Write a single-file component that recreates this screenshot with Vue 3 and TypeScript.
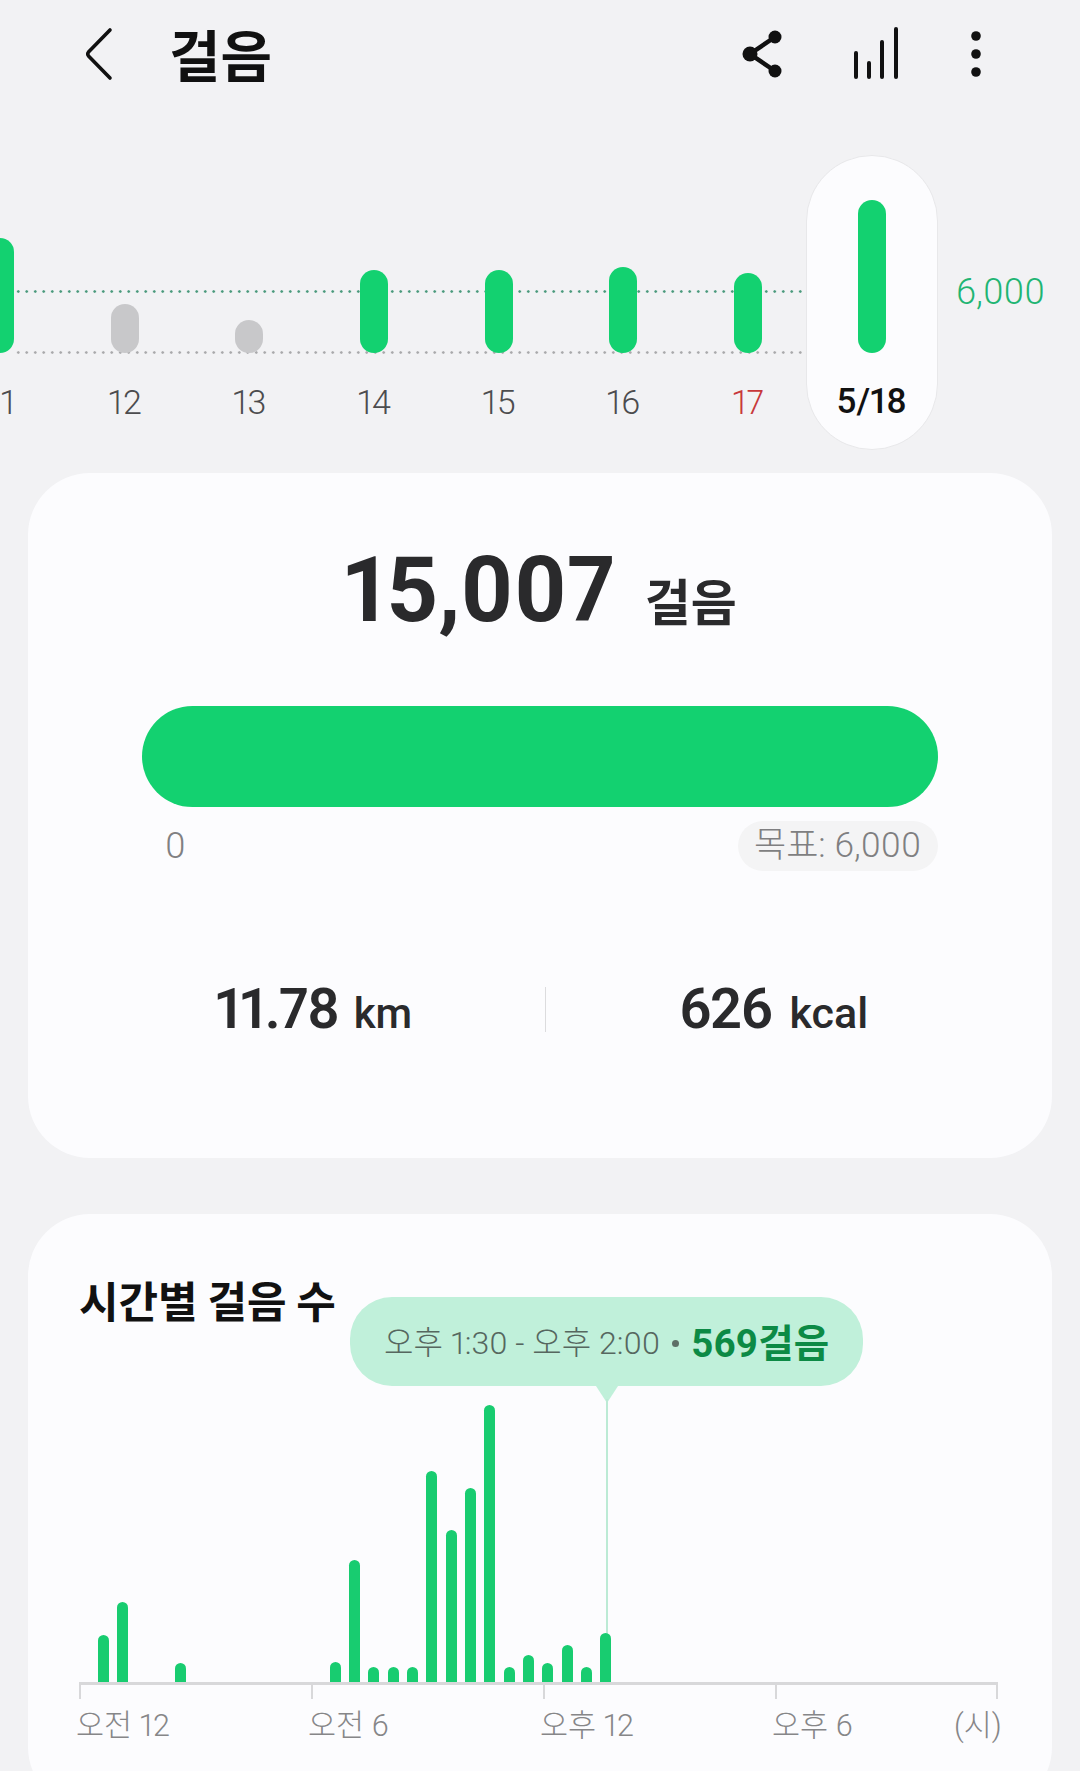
<script setup lang="ts">
const days = [
  { label: '11', height: 115, color: 'green' },
  { label: '12', height: 49, color: 'gray' },
  { label: '13', height: 33, color: 'gray' },
  { label: '14', height: 83, color: 'green' },
  { label: '15', height: 83, color: 'green' },
  { label: '16', height: 86, color: 'green' },
  { label: '17', height: 80, color: 'green', sunday: true },
  { label: '5/18', height: 153, color: 'green', selected: true },
]

// half hour slots, midnight first
const slots: number[] = [47, 80, 0, 0, 19, 0, 0, 0, 0, 0, 0, 0, 20, 122, 15, 15, 15, 211, 152, 194, 277, 15, 27, 19, 37, 15, 49]

const axisLabels = ['오전 12', '오전 6', '오후 12', '오후 6']
</script>

<template>
  <div class="page">
    <header class="top-bar">
      <svg class="back" width="30" height="54" viewBox="0 0 30 54">
        <path d="M26 3 L4.500 25 Q3 27 4.500 29 L26 51" fill="none" stroke="#111" stroke-width="3.600" stroke-linecap="round" stroke-linejoin="round" />
      </svg>
      <h1 class="title">걸음</h1>
      <div class="actions">
        <svg width="46" height="50" viewBox="0 0 46 50">
          <path d="M35 8 L10 25 L35 42" fill="none" stroke="#111" stroke-width="4.500" />
          <circle cx="35" cy="8" r="6.500" fill="#111" />
          <circle cx="10" cy="25" r="7.500" fill="#111" />
          <circle cx="35" cy="42" r="6.500" fill="#111" />
        </svg>
        <svg class="bars-icon" width="50" height="54" viewBox="0 0 50 54">
          <g stroke="#111" stroke-width="4" stroke-linecap="round">
            <line x1="5" y1="27" x2="5" y2="51" />
            <line x1="18" y1="37" x2="18" y2="51" />
            <line x1="31" y1="16" x2="31" y2="51" />
            <line x1="45" y1="3" x2="45" y2="51" />
          </g>
        </svg>
        <svg class="more" width="12" height="48" viewBox="0 0 12 48">
          <circle cx="6" cy="6" r="4.800" fill="#111" />
          <circle cx="6" cy="24" r="4.800" fill="#111" />
          <circle cx="6" cy="42" r="4.800" fill="#111" />
        </svg>
      </div>
    </header>

    <section class="week">
      <div class="line line-goal"></div>
      <div class="line line-base"></div>
      <div
        v-for="day in days"
        :key="day.label"
        class="day"
        :class="{ selected: day.selected, sunday: day.sunday }"
      >
        <div class="day-plot">
          <div class="day-bar" :class="day.color" :style="{ height: day.height + 'px' }"></div>
        </div>
        <span class="day-label">{{ day.label }}</span>
      </div>
      <span class="goal-label">6,000</span>
    </section>

    <section class="card summary">
      <div class="total">
        <span class="total-num">15,007</span>
        <span class="total-unit">걸음</span>
      </div>
      <div class="progress"></div>
      <div class="scale">
        <span class="zero">0</span>
        <span class="target">목표: 6,000</span>
      </div>
      <div class="stats">
        <div class="stat"><b>11.78</b><em>km</em></div>
        <div class="divider"></div>
        <div class="stat stat-right"><b>626</b><em>kcal</em></div>
      </div>
    </section>

    <section class="card hourly">
      <h2 class="hourly-title">시간별 걸음 수</h2>
      <div class="tip">
        <span class="tip-time">오후 1:30 - 오후 2:00</span>
        <span class="tip-dot"></span>
        <span class="tip-value">569걸음</span>
      </div>
      <div class="tip-arrow"></div>
      <div class="tip-line"></div>
      <div class="plot">
        <div v-for="(h, i) in slots" :key="i" class="slot">
          <div v-if="h" class="slot-bar" :style="{ height: h + 'px' }"></div>
        </div>
      </div>
      <div class="axis">
        <div class="tick"></div>
        <div class="tick"></div>
        <div class="tick"></div>
        <div class="tick"></div>
        <div class="tick"></div>
      </div>
      <div class="axis-labels">
        <span v-for="label in axisLabels" :key="label" class="axis-label">{{ label }}</span>
        <span class="axis-unit">(시)</span>
      </div>
    </section>
  </div>
</template>

<style>
html,
body {
  margin: 0;
  background: #f2f2f4;
}
</style>

<style scoped>
.page {
  width: 1080px;
  height: 1771px;
  overflow: hidden;
  background: #f2f2f4;
  font-family: Roboto, "Noto Sans CJK KR", sans-serif;
  font-variant-numeric: proportional-nums;
  color: #2a2a2c;
}

.top-bar {
  height: 156px;
  display: flex;
  align-items: flex-start;
  padding-left: 84px;
  box-sizing: border-box;
}
.back {
  margin-top: 27px;
}
.title {
  margin: 15px 0 0 55px;
  font-family: "Noto Sans CJK KR", sans-serif;
  font-size: 56px;
  line-height: 76px;
  font-weight: 700;
  color: #111;
}
.actions {
  margin-left: auto;
  margin-right: 98px;
  display: flex;
  align-items: flex-start;
}
.actions svg {
  margin-top: 29px;
}
.actions .bars-icon {
  margin-top: 26px;
  margin-left: 65px;
}
.actions .more {
  margin-top: 30px;
  margin-left: 69px;
}

.week {
  position: relative;
  height: 294px;
  display: flex;
  margin-left: -62px;
}
.line {
  position: absolute;
  left: 76px;
  width: 790px;
  height: 3px;
}
.line-goal {
  top: 134px;
  background: radial-gradient(circle, #4a9a7c 1.100px, transparent 1.500px) 0 0 / 8.500px 3px repeat-x;
}
.line-base {
  top: 195px;
  background: radial-gradient(circle, #a9a9ab 1.100px, transparent 1.500px) 0 0 / 8.500px 3px repeat-x;
}
.day {
  position: relative;
  flex: 0 0 124.600px;
  display: flex;
  flex-direction: column;
  align-items: center;
  box-sizing: border-box;
}
.day.selected {
  flex: 0 0 132px;
  margin-left: -4.500px;
  margin-right: 18px;
  margin-top: -1px;
  background: #fcfcfe;
  border: 1px solid #e8e8ea;
  border-radius: 66px;
}
.day-plot {
  height: 197px;
  display: flex;
  align-items: flex-end;
}
.day-bar {
  width: 28px;
  border-radius: 14px;
}
.day-bar.green {
  background: #13d170;
}
.day-bar.gray {
  background: #c8c8ca;
}
.day-label {
  margin-top: 29px;
  font-size: 34px;
  line-height: 40px;
  font-weight: 300;
  color: #4c4c4e;
}
.sunday .day-label {
  color: #c8393b;
}
.selected .day-label {
  font-size: 35px;
  font-weight: 500;
  color: #111;
}
.goal-label {
  align-self: flex-start;
  margin-top: 116px;
  font-size: 36px;
  line-height: 40px;
  font-weight: 300;
  color: #1fb573;
}

.card {
  margin: 0 28px;
  background: #fcfcfe;
  border-radius: 62px;
}
.summary {
  margin-top: 23px;
  height: 685px;
  padding: 0 114px;
  box-sizing: border-box;
}
.total {
  display: flex;
  justify-content: center;
  align-items: baseline;
  padding-top: 67px;
  height: 167px;
  box-sizing: border-box;
}
.total-num {
  font-size: 90px;
  line-height: 101px;
  font-weight: 700;
}
.total-unit {
  margin-left: 30px;
  font-family: "Noto Sans CJK KR", sans-serif;
  font-size: 50px;
  font-weight: 700;
}
.progress {
  height: 101px;
  margin-top: 66px;
  border-radius: 51px;
  background: #13d170;
}
.scale {
  display: flex;
  justify-content: space-between;
  align-items: center;
  margin-top: 14px;
}
.zero {
  margin-left: 23px;
  font-size: 36px;
  font-weight: 300;
  color: #808082;
}
.target {
  height: 50px;
  padding: 0 17px 0 16px;
  border-radius: 25px;
  background: #f4f4f5;
  font-size: 35px;
  font-weight: 300;
  line-height: 50px;
  color: #7f7f81;
}
.stats {
  display: grid;
  grid-template-columns: 403px 1px 1fr;
  align-items: center;
  margin-top: 105px;
  height: 48px;
}
.stat {
  display: flex;
  align-items: baseline;
  padding-left: 73px;
}
.stat-right {
  padding-left: 133px;
}
.stat b {
  font-size: 56px;
  font-weight: 600;
  letter-spacing: -1.500px;
}
.stat em {
  margin-left: 15px;
  font-style: normal;
  font-size: 42px;
  font-weight: 500;
}
.stat-right em {
  margin-left: 18px;
  font-size: 43px;
}
.divider {
  height: 45px;
  background: #dcdcde;
}

.hourly {
  position: relative;
  margin-top: 56px;
  height: 595px;
}
.hourly-title {
  margin: 0;
  padding: 55px 0 0 51px;
  font-family: "Noto Sans CJK KR", sans-serif;
  font-size: 43px;
  line-height: 60px;
  font-weight: 700;
  color: #111;
}
.tip {
  position: absolute;
  left: 322px;
  top: 83px;
  width: 513px;
  height: 89px;
  border-radius: 42px;
  background: #c0f0da;
  display: flex;
  align-items: center;
  padding: 0 0 3px 34px;
  box-sizing: border-box;
}
.tip-time {
  font-size: 32px;
  font-weight: 300;
  color: #56675f;
}
.tip-dot {
  width: 7px;
  height: 7px;
  margin: 6px 12px 0 12px;
  border-radius: 50%;
  background: #5e6f67;
}
.tip-value {
  font-size: 38.500px;
  font-weight: 700;
  color: #0c8a45;
}
.tip-arrow {
  position: absolute;
  left: 568px;
  top: 172px;
  width: 0;
  height: 0;
  border-left: 11px solid transparent;
  border-right: 11px solid transparent;
  border-top: 17px solid #c0f0da;
}
.tip-line {
  position: absolute;
  left: 578px;
  top: 185px;
  width: 2px;
  height: 240px;
  background: #bcead5;
}
.plot {
  position: relative;
  height: 300px;
  margin-top: 53px;
  padding-left: 65.500px;
  display: flex;
  align-items: flex-end;
}
.slot {
  flex: 0 0 19.330px;
  display: flex;
  justify-content: center;
}
.slot-bar {
  width: 11px;
  border-radius: 5.500px 5.500px 0 0;
  background: #18cc70;
}
.axis {
  margin: 0 54px 0 51px;
  height: 14px;
  border-top: 3px solid #d8d8da;
  display: flex;
}
.tick {
  flex: none;
  width: 2px;
  margin-right: 230px;
  background: #d8d8da;
}
.tick:nth-child(4) {
  margin-right: 0;
}
.tick:last-child {
  margin-left: auto;
  margin-right: 0;
}
.axis-labels {
  margin: 7px 52px 0 48px;
  display: flex;
  font-size: 30.500px;
  line-height: 40px;
  font-weight: 300;
  color: #868688;
}
.axis-label {
  flex: 0 0 232px;
}
.axis-unit {
  margin-left: -50px;
}
</style>
